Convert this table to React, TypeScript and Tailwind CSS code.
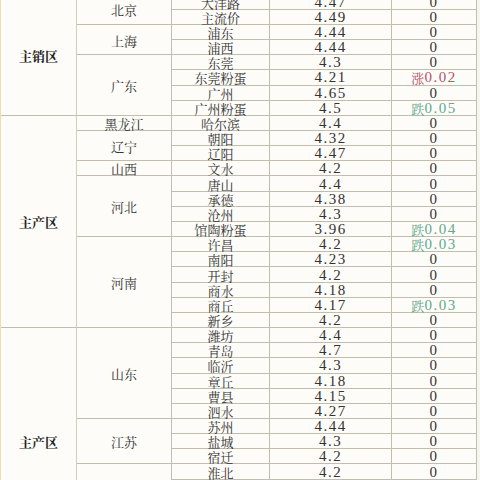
import React from "react";

type City = { name: string; price: string; change: string };
type Province = { name: string; cities: City[] };
type Region = { name: string; provinces: Province[] };

const c = (name: string, price: string, change = "0"): City => ({ name, price, change });

const regions: Region[] = [
  {
    name: "主销区",
    provinces: [
      { name: "北京", cities: [c("大洋路", "4.47"), c("主流价", "4.49")] },
      { name: "上海", cities: [c("浦东", "4.44"), c("浦西", "4.44")] },
      {
        name: "广东",
        cities: [c("东莞", "4.3"), c("东莞粉蛋", "4.21", "涨0.02"), c("广州", "4.65"), c("广州粉蛋", "4.5", "跌0.05")],
      },
    ],
  },
  {
    name: "主产区",
    provinces: [
      { name: "黑龙江", cities: [c("哈尔滨", "4.4")] },
      { name: "辽宁", cities: [c("朝阳", "4.32"), c("辽阳", "4.47")] },
      { name: "山西", cities: [c("文水", "4.2")] },
      { name: "河北", cities: [c("唐山", "4.4"), c("承德", "4.38"), c("沧州", "4.3"), c("馆陶粉蛋", "3.96", "跌0.04")] },
      {
        name: "河南",
        cities: [c("许昌", "4.2", "跌0.03"), c("南阳", "4.23"), c("开封", "4.2"), c("商水", "4.18"), c("商丘", "4.17", "跌0.03"), c("新乡", "4.2")],
      },
    ],
  },
  {
    name: "主产区",
    provinces: [
      { name: "山东", cities: [c("潍坊", "4.4"), c("青岛", "4.7"), c("临沂", "4.3"), c("章丘", "4.18"), c("曹县", "4.15"), c("泗水", "4.27")] },
      { name: "江苏", cities: [c("苏州", "4.44"), c("盐城", "4.3"), c("宿迁", "4.2")] },
      // the rest of this province is below the visible area
      { name: "", cities: [c("淮北", "4.2"), c("", "", ""), c("", "", ""), c("", "", ""), c("", "", ""), c("", "", "")] },
    ],
  },
];

const span: Record<number, string> = {
  1: "row-span-1",
  2: "row-span-2",
  3: "row-span-3",
  4: "row-span-4",
  6: "row-span-6",
  8: "row-span-8",
  14: "row-span-14",
  15: "row-span-15",
};

const cell = "flex items-center justify-center border-r border-b border-[#c2beae] pt-px leading-none";
const cjk = "font-['Noto_Serif_CJK_SC','Noto_Sans_CJK_SC',serif] text-[13px] text-[#333]";
const num = "font-['Liberation_Serif','Noto_Sans_CJK_SC',serif] text-[15px] tracking-[1.5px] text-[#333]";

function Change({ value }: { value: string }) {
  if (value.startsWith("涨") || value.startsWith("跌")) {
    const up = value.startsWith("涨");
    return (
      <span className={`flex items-center ${up ? "text-[#b4546a]" : "text-[#62a98e]"}`}>
        <span className="font-['Noto_Serif_CJK_SC','Noto_Sans_CJK_SC',serif] text-[13px]">{value[0]}</span>
        <span className="font-['Liberation_Serif',serif] text-[15px] tracking-[1.5px]">{value.slice(1)}</span>
      </span>
    );
  }
  return <span className={num}>{value}</span>;
}

export default function App() {
  return (
    <div className="h-[480px] w-[480px] overflow-hidden bg-[#f6f5f0]">
      <div className="mt-[-5.4px] grid w-[477px] grid-cols-[76px_95px_98px_122px_85px] auto-rows-[15.17px] border-l border-[#e6dfb8] bg-[#fdfcf8]">
        {regions.map((r, ri) => {
          const total = r.provinces.reduce((n, p) => n + p.cities.length, 0);
          return (
            <React.Fragment key={ri}>
              <div className={`${cell} col-start-1 ${span[total]} border-r-[#d2cdbd] font-['Noto_Serif_CJK_SC','Noto_Sans_CJK_SC',serif] text-[13px] font-bold text-[#1f1f1f]`}>
                {r.name}
              </div>
              {r.provinces.map((p, pi) => (
                <React.Fragment key={pi}>
                  <div className={`${cell} col-start-2 ${span[p.cities.length]} ${cjk}`}>{p.name}</div>
                  {p.cities.map((city, ci) => (
                    <React.Fragment key={ci}>
                      <div className={`${cell} col-start-3 ${cjk}`}>{city.name}</div>
                      <div className={`${cell} col-start-4 ${num}`}>{city.price}</div>
                      <div className={`${cell} col-start-5`}>
                        <Change value={city.change} />
                      </div>
                    </React.Fragment>
                  ))}
                </React.Fragment>
              ))}
            </React.Fragment>
          );
        })}
      </div>
    </div>
  );
}
